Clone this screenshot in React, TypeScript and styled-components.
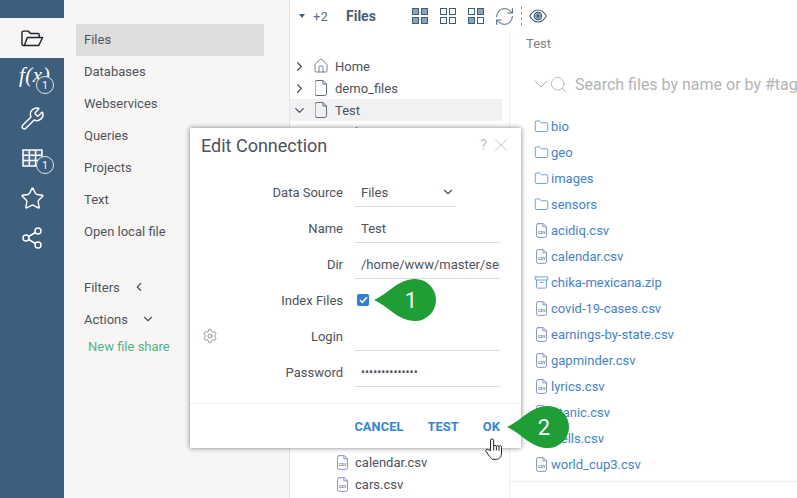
import React from 'react';
import styled, { createGlobalStyle } from 'styled-components';
import { ChevronDown, ChevronLeft, ChevronRight, Search, Settings, Share2, Star, Wrench, X, RefreshCw, House, Folder, Archive } from 'lucide-react';

const GlobalStyle = createGlobalStyle`
  html, body, #root {
    margin: 0;
    height: 100%;
    overflow: hidden;
  }
  body {
    background: #fff;
    font-family: Roboto, "Liberation Sans", sans-serif;
    font-size: 13px;
    color: #4d5261;
  }
  * {
    box-sizing: border-box;
  }
  svg {
    flex: none;
  }
`;

const Page = styled.div`
  position: relative;
  display: flex;
  width: 797px;
  height: 498px;
  overflow: hidden;
`;

const IconRail = styled.nav`
  width: 64px;
  flex: none;
  padding-top: 18px;
  background: #3e5e7e;
`;

const RailItem = styled.div<{ $active?: boolean }>`
  position: relative;
  display: flex;
  align-items: center;
  justify-content: center;
  height: 40px;
  color: ${p => (p.$active ? '#1c2530' : '#fff')};
  background: ${p => (p.$active ? '#f7f6f5' : 'transparent')};
`;

const FxGlyph = styled.span`
  width: 100%;
  padding: 0 0 6px 19px;
  font-family: "Liberation Serif", serif;
  font-size: 21px;
  font-style: italic;
  letter-spacing: 0.5px;
  color: #fff;
`;

const RailBadge = styled.span`
  position: absolute;
  left: 36px;
  top: 18px;
  display: flex;
  align-items: center;
  justify-content: center;
  width: 18px;
  height: 18px;
  border: 1px solid #dfe5ea;
  border-radius: 50%;
  font-size: 10px;
  color: #fff;
  background: #3e5e7e;
`;

const NavPanel = styled.aside`
  width: 225px;
  flex: none;
  padding: 24px 25px 0 12px;
  background: #f7f6f5;
`;

const NavItem = styled.div<{ $active?: boolean }>`
  display: flex;
  align-items: center;
  height: 32px;
  padding: 0 0 2px 8px;
  color: #4f535c;
  background: ${p => (p.$active ? '#dedddb' : 'transparent')};
`;

const NavSection = styled(NavItem)`
  gap: 12.5px;
  padding-bottom: 0;
`;

const NavGroup = styled.div`
  margin-top: 23px;
`;

const NavAction = styled.div`
  height: 24px;
  padding-left: 12px;
  line-height: 24px;
  color: #4fb48c;
`;

const Workspace = styled.main`
  flex: 1;
  min-width: 0;
  display: flex;
  flex-direction: column;
  border-left: 1px solid #e6e6e6;
`;

const Toolbar = styled.header`
  display: flex;
  align-items: center;
  height: 32px;
  flex: none;
  padding-left: 9px;
  color: #3e5e7e;
`;

const Caret = styled.span`
  width: 0;
  height: 0;
  margin-right: 8px;
  border-left: 3.5px solid transparent;
  border-right: 3.5px solid transparent;
  border-top: 4px solid #3e5e7e;
`;

const Count = styled.span`
  width: 33px;
  font-size: 13px;
  color: #5b7088;
`;

const ToolbarTitle = styled.span`
  width: 66px;
  font-size: 14px;
  font-weight: 700;
  color: #4a5d74;
`;

const LayoutGrid = styled.span`
  display: grid;
  grid-template-columns: 7px 7px;
  gap: 2px;
  margin-right: 12px;
`;

const LayoutCell = styled.span<{ $filled?: boolean }>`
  width: 7px;
  height: 7px;
  border: 1.5px solid #3e5e7e;
  background: ${p => (p.$filled ? '#8fa3b8' : 'transparent')};
`;

const RefreshBox = styled.span`
  display: flex;
  margin-left: -2px;
`;

const ToolDivider = styled.span`
  height: 20px;
  margin: 0 7px 0 6px;
  border-left: 1px dashed #a0a0a0;
`;

const Columns = styled.div`
  flex: 1;
  display: flex;
  min-height: 0;
`;

const TreePanel = styled.section`
  width: 220px;
  flex: none;
  padding: 23px 7px 0 0;
  border-right: 1px solid #eeeeee;
`;

const TreeRow = styled.div<{ $selected?: boolean }>`
  display: flex;
  align-items: center;
  height: 22px;
  padding-left: 2px;
  color: #4d5261;
  background: ${p => (p.$selected ? '#f1f1f3' : 'transparent')};
`;

const TreeChevron = styled.span`
  display: flex;
  width: 21px;
  flex: none;
  color: #4d5261;
`;

const TreeIcon = styled.span`
  display: flex;
  justify-content: center;
  width: 16px;
  margin-right: 6px;
  flex: none;
  color: #5d6b7c;
`;

const TreeChild = styled.div`
  display: flex;
  align-items: center;
  height: 22px;
  padding-left: 47px;
  gap: 7px;
  color: #4d5261;
`;

const TreeChildBlank = styled.span`
  width: 11px;
`;

const HiddenRows = styled.div`
  height: 308px;
`;

const BrowserPanel = styled.section`
  flex: 1;
  min-width: 0;
  display: flex;
  flex-direction: column;
  height: 450px;
  border-bottom: 1px solid #eeeeee;
`;

const Breadcrumb = styled.div`
  padding: 3px 0 0 16px;
  height: 26px;
  line-height: 18px;
  font-size: 13px;
  color: #7d7f85;
`;

const SearchRow = styled.div`
  display: flex;
  align-items: center;
  height: 30px;
  margin-top: 11px;
  padding-left: 19px;
  white-space: nowrap;
  color: #a9b3bd;
`;

const SearchGlass = styled.span`
  display: flex;
  margin-left: -4px;
`;

const SearchText = styled.span`
  margin-left: 7px;
  font-size: 16px;
  color: #b3b4b7;
`;

const FileList = styled.ul`
  list-style: none;
  margin: 14px 0 0;
  padding: 0 0 0 24px;
`;

const FileItem = styled.li`
  display: flex;
  align-items: center;
  gap: 2px;
  height: 26px;
  color: #3f83d8;
`;

const FileIconBox = styled.span`
  display: flex;
  justify-content: center;
  width: 15px;
  flex: none;
  color: #4b86d6;
`;

const Dialog = styled.div`
  position: absolute;
  left: 190px;
  top: 128px;
  width: 331px;
  height: 320px;
  display: flex;
  flex-direction: column;
  background: #fff;
  box-shadow: 0 0 5px rgba(60, 60, 70, 0.65);
`;

const DialogHeader = styled.div`
  display: flex;
  align-items: center;
  justify-content: space-between;
  height: 34px;
  padding: 0 9px 0 11px;
`;

const DialogTitle = styled.h2`
  margin: 0;
  font-size: 18px;
  font-weight: 400;
  color: #4d5261;
`;

const DialogTools = styled.div`
  display: flex;
  align-items: center;
  gap: 3px;
  font-size: 15px;
  color: #c4c6c9;
`;

const DialogForm = styled.div`
  flex: 1;
  padding-top: 12px;
`;

const FormRow = styled.div`
  display: grid;
  grid-template-columns: 153px 145px;
  column-gap: 12px;
  align-items: center;
  height: 36px;
`;

const FormLabel = styled.label`
  display: flex;
  justify-content: flex-end;
  color: #4d5261;
`;

const SettingsLabel = styled(FormLabel)`
  justify-content: space-between;
  align-items: center;
  padding-left: 12px;
  color: #6b6f76;
`;

const LoginText = styled.span`
  color: #4d5261;
`;

const TextField = styled.input`
  width: 100%;
  height: 28px;
  margin-top: 1px;
  padding: 0 0 0 6px;
  border: 0;
  border-bottom: 1px solid #dcdcdc;
  outline: none;
  font: inherit;
  color: #4d5261;
  background: transparent;
`;

const PasswordField = styled(TextField)`
  font-size: 12px;
`;

const SelectField = styled.div`
  display: flex;
  align-items: center;
  justify-content: space-between;
  width: 101px;
  height: 28px;
  margin-top: 1px;
  padding: 0 1px 0 6px;
  border-bottom: 1px solid #dcdcdc;
`;

const CheckBox = styled.span`
  display: flex;
  align-items: center;
  justify-content: center;
  width: 12px;
  height: 12px;
  margin-left: 2px;
  border-radius: 2px;
  background: #2f7fd6;
`;

const DialogFooter = styled.div`
  display: flex;
  align-items: center;
  justify-content: flex-end;
  gap: 24px;
  height: 45px;
  padding-right: 21px;
  border-top: 1px solid #efefef;
`;

const FooterButton = styled.button`
  padding: 0;
  border: 0;
  font-family: inherit;
  font-size: 12.8px;
  font-weight: 700;
  letter-spacing: 0.1px;
  color: #3285dc;
  background: none;
`;

const Callout = styled.div<{ $left: number; $top: number }>`
  position: absolute;
  left: ${p => p.$left}px;
  top: ${p => p.$top}px;
  display: flex;
  align-items: center;
  justify-content: flex-end;
  width: 62px;
  height: 42px;
  padding-right: 19px;
  font-size: 22px;
  color: #fff;

  svg {
    position: absolute;
    inset: 0;
  }
  span {
    position: relative;
  }
`;

const HandCursor = styled.svg`
  position: absolute;
  left: 485px;
  top: 438px;
`;

const CsvIcon = () => (
  <svg width="11" height="15" viewBox="0 0 12 16" fill="none">
    <path d="M2 .5h6L11.500 4v9.500a2 2 0 0 1-2 2h-7a2 2 0 0 1-2-2v-11a2 2 0 0 1 2-2z" stroke="#7c88cc" />
    <path d="M7.500.5V4h4" stroke="#7c88cc" />
    <text x="6" y="12" textAnchor="middle" fontSize="5.500" fontFamily="Roboto, sans-serif" fill="#4a5a80">csv</text>
  </svg>
);

const BlankFileIcon = () => (
  <svg width="12" height="16" viewBox="0 0 12 16" fill="none">
    <path d="M2 .5h6L11.500 4v9.500a2 2 0 0 1-2 2h-7.500a2 2 0 0 1-2-2v-11a2 2 0 0 1 2-2z" stroke="#5d6b7c" />
    <path d="M8 .5V4h3.500" stroke="#5d6b7c" />
  </svg>
);

const FolderOpenIcon = () => (
  <svg width="23" height="17" viewBox="0 0 24 17" fill="none" stroke="currentColor" strokeWidth="1.5" strokeLinejoin="round">
    <path d="M3.500 15.800h15l4-8.300h-16z" />
    <path d="M3.500 15.800h-1A1.500 1.500 0 0 1 1 14.300v-12A1.500 1.500 0 0 1 2.500.8h5L10 3.300h7.500A1.500 1.500 0 0 1 19 4.800v2.700" />
  </svg>
);

const TableIcon = () => (
  <svg width="21" height="18" viewBox="0 0 21 18" fill="none" stroke="#fff" strokeWidth="1.5">
    <rect x="1" y="1" width="19" height="16" fill="rgba(255,255,255,0.1)" />
    <path d="M1 6.300h19M1 11.600h19M7.300 1v16M13.600 1v16" />
  </svg>
);

const EyeIcon = () => (
  <svg width="18" height="14" viewBox="0 0 18 14" fill="none" stroke="#3e5e7e" strokeWidth="1.1">
    <path d="M.7 7C3 3 6 1 9 1s6 2 8.300 6C15 11 12 13 9 13S3 11 .7 7z" />
    <circle cx="9" cy="7" r="3.800" fill="#8fa3b8" />
    <circle cx="9" cy="7" r="1.500" fill="#3e5e7e" stroke="none" />
  </svg>
);

const CalloutShape = () => (
  <svg width="62" height="42" viewBox="0 0 62 42">
    <path d="M0 21C14 15 24 0 41 0a21 21 0 0 1 0 42C24 42 14 27 0 21z" fill="#1e9e34" />
  </svg>
);

const layouts = [
  [true, true, true, true],
  [false, false, false, false],
  [false, true, true, false],
];

type FileKind = 'folder' | 'csv' | 'zip';

const browserFiles: { name: string; kind: FileKind }[] = [
  { name: 'bio', kind: 'folder' },
  { name: 'geo', kind: 'folder' },
  { name: 'images', kind: 'folder' },
  { name: 'sensors', kind: 'folder' },
  { name: 'acidiq.csv', kind: 'csv' },
  { name: 'calendar.csv', kind: 'csv' },
  { name: 'chika-mexicana.zip', kind: 'zip' },
  { name: 'covid-19-cases.csv', kind: 'csv' },
  { name: 'earnings-by-state.csv', kind: 'csv' },
  { name: 'gapminder.csv', kind: 'csv' },
  { name: 'lyrics.csv', kind: 'csv' },
  { name: 'titanic.csv', kind: 'csv' },
  { name: 'wells.csv', kind: 'csv' },
  { name: 'world_cup3.csv', kind: 'csv' },
];

const navItems = ['Files', 'Databases', 'Webservices', 'Queries', 'Projects', 'Text', 'Open local file'];

const FileGlyph = ({ kind }: { kind: FileKind }) => {
  if (kind === 'csv') return <CsvIcon />;
  if (kind === 'zip') return <Archive size={15} strokeWidth={1.25} />;
  return <Folder size={15} strokeWidth={1.25} />;
};

export default function App() {
  return (
    <Page>
      <GlobalStyle />
      <IconRail>
        <RailItem $active>
          <FolderOpenIcon />
        </RailItem>
        <RailItem>
          <FxGlyph>f(x)</FxGlyph>
          <RailBadge>1</RailBadge>
        </RailItem>
        <RailItem>
          <Wrench size={25} strokeWidth={1.4} />
        </RailItem>
        <RailItem>
          <TableIcon />
          <RailBadge>1</RailBadge>
        </RailItem>
        <RailItem>
          <Star size={25} strokeWidth={1.4} />
        </RailItem>
        <RailItem>
          <Share2 size={24} strokeWidth={1.5} />
        </RailItem>
      </IconRail>

      <NavPanel>
        {navItems.map((item, i) => (
          <NavItem key={item} $active={i === 0}>{item}</NavItem>
        ))}
        <NavGroup>
          <NavSection>
            Filters <ChevronLeft size={14} strokeWidth={2} />
          </NavSection>
          <NavSection>
            Actions <ChevronDown size={14} strokeWidth={2} />
          </NavSection>
          <NavAction>New file share</NavAction>
        </NavGroup>
      </NavPanel>

      <Workspace>
        <Toolbar>
          <Caret />
          <Count>+2</Count>
          <ToolbarTitle>Files</ToolbarTitle>
          {layouts.map((cells, i) => (
            <LayoutGrid key={i}>
              {cells.map((filled, j) => (
                <LayoutCell key={j} $filled={filled} />
              ))}
            </LayoutGrid>
          ))}
          <RefreshBox><RefreshCw size={21} strokeWidth={1.1} /></RefreshBox>
          <ToolDivider />
          <EyeIcon />
        </Toolbar>

        <Columns>
          <TreePanel>
            <TreeRow>
              <TreeChevron><ChevronRight size={15} strokeWidth={2} /></TreeChevron>
              <TreeIcon><House size={16} strokeWidth={1.25} /></TreeIcon>
              Home
            </TreeRow>
            <TreeRow>
              <TreeChevron><ChevronRight size={15} strokeWidth={2} /></TreeChevron>
              <TreeIcon><BlankFileIcon /></TreeIcon>
              demo_files
            </TreeRow>
            <TreeRow $selected>
              <TreeChevron><ChevronDown size={15} strokeWidth={2} /></TreeChevron>
              <TreeIcon><BlankFileIcon /></TreeIcon>
              Test
            </TreeRow>
            <TreeChild><TreeChildBlank />bio</TreeChild>
            {/* rows behind the dialog are not visible in the picture */}
            <HiddenRows />
            <TreeChild><CsvIcon />calendar.csv</TreeChild>
            <TreeChild><CsvIcon />cars.csv</TreeChild>
          </TreePanel>

          <BrowserPanel>
            <Breadcrumb>Test</Breadcrumb>
            <SearchRow>
              <ChevronDown size={24} strokeWidth={1} />
              <SearchGlass><Search size={19} strokeWidth={1.1} /></SearchGlass>
              <SearchText>Search files by name or by #tags</SearchText>
            </SearchRow>
            <FileList>
              {browserFiles.map(file => (
                <FileItem key={file.name}>
                  <FileIconBox><FileGlyph kind={file.kind} /></FileIconBox>
                  {file.name}
                </FileItem>
              ))}
            </FileList>
          </BrowserPanel>
        </Columns>
      </Workspace>

      <Dialog>
        <DialogHeader>
          <DialogTitle>Edit Connection</DialogTitle>
          <DialogTools>? <X size={22} strokeWidth={1} /></DialogTools>
        </DialogHeader>
        <DialogForm>
          <FormRow>
            <FormLabel>Data Source</FormLabel>
            <SelectField>Files <ChevronDown size={14} strokeWidth={2} /></SelectField>
          </FormRow>
          <FormRow>
            <FormLabel>Name</FormLabel>
            <TextField readOnly value="Test" />
          </FormRow>
          <FormRow>
            <FormLabel>Dir</FormLabel>
            <TextField readOnly value="/home/www/master/server" />
          </FormRow>
          <FormRow>
            <FormLabel>Index Files</FormLabel>
            <CheckBox>
              <svg width="9" height="8" viewBox="0 0 9 8" fill="none" stroke="#fff" strokeWidth="1.6">
                <path d="M1 4l2.300 2.300L8 1.300" />
              </svg>
            </CheckBox>
          </FormRow>
          <FormRow>
            <SettingsLabel>
              <Settings size={16} strokeWidth={1.1} />
              <LoginText>Login</LoginText>
            </SettingsLabel>
            <TextField readOnly value="" />
          </FormRow>
          <FormRow>
            <FormLabel>Password</FormLabel>
            <PasswordField readOnly type="password" value="12345678901234" />
          </FormRow>
        </DialogForm>
        <DialogFooter>
          <FooterButton>CANCEL</FooterButton>
          <FooterButton>TEST</FooterButton>
          <FooterButton>OK</FooterButton>
        </DialogFooter>
      </Dialog>

      <Callout $left={374} $top={279}>
        <CalloutShape />
        <span>1</span>
      </Callout>
      <Callout $left={507} $top={406}>
        <CalloutShape />
        <span>2</span>
      </Callout>
      <HandCursor width="17" height="22" viewBox="0 0 17 22" fill="#fff" stroke="#222" strokeWidth="1" strokeLinejoin="round">
        <path d="M5.500 12.500V2.500a1.600 1.600 0 0 1 3.200 0V8.500a1.400 1.400 0 0 1 2.700-.2 1.400 1.400 0 0 1 2.600.3 1.300 1.300 0 0 1 2.500.9V15c0 3.500-2 6.300-5 6.300H9c-2 0-3-1-4.500-3L1 13.500c-1-1.500.9-3 2.300-1.800z" />
        <path d="M8.700 8.500v4M11.400 8.300v4M14 8.600v4" fill="none" />
      </HandCursor>
    </Page>
  );
}
